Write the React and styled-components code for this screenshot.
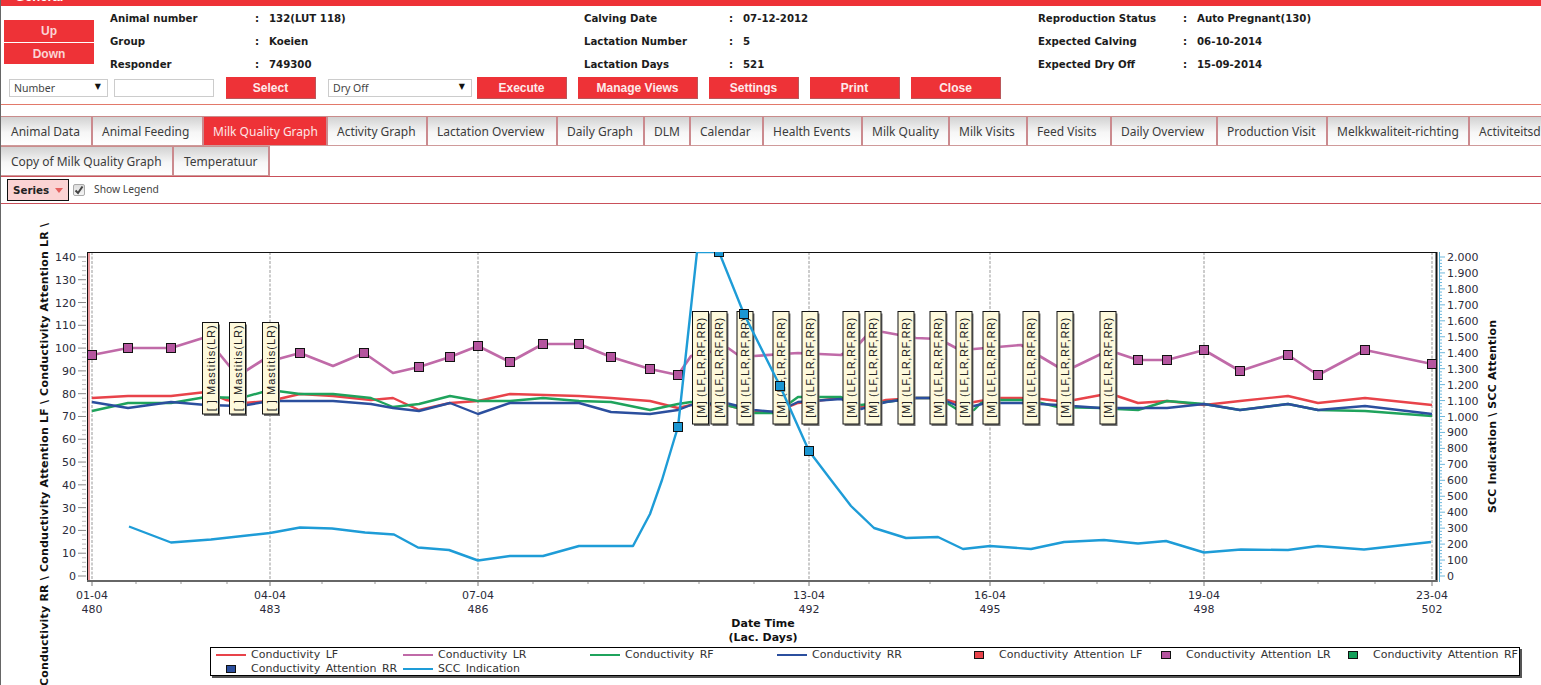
import React from "react";
import styled, { createGlobalStyle } from "styled-components";

const RED = "#ee3237";
const UI_FONT = `"Noto Sans", "DejaVu Sans", sans-serif`;
const DATA_FONT = `"DejaVu Sans", Verdana, sans-serif`;
const BTN_FONT = `"Liberation Sans", Arial, sans-serif`;

const GlobalStyle = createGlobalStyle`
  html, body { margin: 0; padding: 0; background: #fff; overflow: hidden; }
`;

const info = [
  {
    width: 474,
    rows: [
      ["Animal number", "132(LUT 118)"],
      ["Group", "Koeien"],
      ["Responder", "749300"],
    ],
  },
  {
    width: 454,
    rows: [
      ["Calving Date", "07-12-2012"],
      ["Lactation Number", "5"],
      ["Lactation Days", "521"],
    ],
  },
  {
    width: 400,
    rows: [
      ["Reproduction Status", "Auto Pregnant(130)"],
      ["Expected Calving", "06-10-2014"],
      ["Expected Dry Off", "15-09-2014"],
    ],
  },
];

const tabsTop = [
  ["Animal Data", 92],
  ["Animal Feeding", 111],
  ["Milk Quality Graph", 124],
  ["Activity Graph", 100],
  ["Lactation Overview", 130],
  ["Daily Graph", 87],
  ["DLM", 46],
  ["Calendar", 73],
  ["Health Events", 99],
  ["Milk Quality", 87],
  ["Milk Visits", 78],
  ["Feed Visits", 84],
  ["Daily Overview", 106],
  ["Production Visit", 110],
  ["Melkkwaliteit-richting", 142],
  ["Activiteitsdiagram", 130],
];
const tabsBottom = [
  ["Copy of Milk Quality Graph", 173],
  ["Temperatuur", 96],
];

const lf = [[91,398],[127,396],[170,396],[205,392],[225,400],[243,403],[269,401],[299,394],[332,396],[370,400],[392,398],[418,410],[449,403],[477,401],[509,394],[578,396],[610,398],[649,401],[677,408],[690,405],[725,405],[737,408],[753,412],[775,412],[797,403],[840,398],[860,407],[885,400],[915,398],[938,398],[957,403],[973,402],[997,398],[1020,398],[1040,399],[1057,401],[1073,400],[1100,395],[1116,396],[1137,403],[1166,401],[1203,405],[1239,401],[1287,396],[1317,403],[1364,398],[1431,405]];
const lr = [[91,355],[127,348],[170,348],[202,338],[207,340],[230,368],[243,372],[262,360],[277,359],[299,353],[332,366],[363,353],[392,373],[418,367],[449,357],[477,346],[509,362],[542,344],[578,344],[610,357],[649,369],[677,375],[690,356],[727,348],[737,355],[753,356],[797,353],[840,355],[857,345],[870,331],[882,332],[915,338],[938,339],[957,349],[973,349],[1020,345],[1057,367],[1073,367],[1100,354],[1116,353],[1137,360],[1166,360],[1203,350],[1239,371],[1287,355],[1317,375],[1364,350],[1431,364]];
const rf = [[91,411],[127,403],[170,403],[205,397],[240,398],[269,390],[299,394],[332,394],[370,398],[392,407],[418,404],[449,396],[477,401],[509,401],[542,398],[578,401],[610,402],[649,410],[677,404],[690,402],[725,405],[737,408],[753,413],[775,413],[797,397],[840,397],[860,405],[885,402],[915,398],[938,398],[957,410],[973,410],[980,403],[997,400],[1020,400],[1040,403],[1057,407],[1100,408],[1116,409],[1137,410],[1166,401],[1203,404],[1239,410],[1287,404],[1317,410],[1364,411],[1431,416]];
const rr = [[91,402],[127,408],[170,402],[205,405],[240,406],[269,401],[299,401],[332,401],[370,404],[392,408],[418,411],[449,403],[477,414],[509,403],[542,403],[578,403],[610,412],[649,414],[677,410],[690,405],[725,403],[753,410],[775,412],[797,402],[840,399],[860,409],[885,402],[915,398],[938,398],[957,406],[973,406],[985,403],[1020,403],[1057,405],[1100,408],[1116,408],[1137,408],[1166,408],[1203,404],[1239,410],[1287,404],[1317,410],[1364,406],[1431,414]];
const scc = [[128,526.5],[170,542.5],[210,539.5],[269,533],[299,527.5],[331,528.5],[364,532.5],[393,534.5],[417,547.5],[448,550],[477,560.5],[509,556],[542,556],[578,546],[632,546],[649,514],[661,480],[673,440],[677,427],[696,252],[718,252],[743,314],[779,386],[808,451],[830,480],[850,506],[873,528],[905,538],[937,537],[962,549],[989,546],[1030,549],[1063,542],[1103,540],[1137,543.5],[1165,541],[1203,552.5],[1240,549.5],[1287,550],[1317,546],[1363,549.5],[1430,542]];

const lrMarkers = [[91,355],[127,348],[170,348],[299,353],[363,353],[418,367],[449,357],[477,346],[509,362],[542,344],[578,344],[610,357],[649,369],[677,375],[1137,360],[1166,360],[1203,350],[1239,371],[1287,355],[1317,375],[1364,350],[1431,364]];
const sccMarkers = [[677,427],[718,252],[743,314],[779,386],[808,451]];

const mastitisTags = [209, 236, 269];
const visitTags = [699.5, 718, 744, 780, 809, 850, 872, 905, 937, 963, 990, 1030, 1064, 1107];

const dates = [
  [91, "01-04", "480"],
  [269, "04-04", "483"],
  [477, "07-04", "486"],
  [808, "13-04", "492"],
  [989, "16-04", "495"],
  [1203, "19-04", "498"],
  [1431, "23-04", "502"],
];
const minorX = [135,180,226,321,374,425,532,587,643,698,753,868,929,1043,1096,1149,1260,1317,1374];

const leftY = (v) => 576 - v * 2.279;
const rightY = (v) => 576 - v * 0.1595;
const pts = (list) => list.map((p) => p.join(",")).join(" ");
const range = (end, step) => {
  const out = [];
  for (let v = 0; v <= end; v += step) out.push(v);
  return out;
};
const thousand = (v) =>
  v >= 1000 ? `${Math.floor(v / 1000)}.${String(v % 1000).padStart(3, "0")}` : String(v);

const legend = [
  { label: "Conductivity LF", color: "#e8434a" },
  { label: "Conductivity LR", color: "#c06aa8" },
  { label: "Conductivity RF", color: "#1fa35c" },
  { label: "Conductivity RR", color: "#2b4f9e" },
  { label: "Conductivity Attention LF", color: "#e8434a", box: true },
  { label: "Conductivity Attention LR", color: "#b5559f", box: true },
  { label: "Conductivity Attention RF", color: "#14a05a", box: true },
  { label: "Conductivity Attention RR", color: "#2b4f9e", box: true },
  { label: "SCC Indication", color: "#1e9cd7" },
];

const Page = styled.div`
  width: 1540px;
  height: 685px;
  border-left: 1px solid #666;
  display: flex;
  flex-direction: column;
  overflow: hidden;
  position: relative;
  background: #fff;
`;

const TitleBar = styled.div`
  height: 6px;
  flex: none;
  background: ${RED};
  overflow: hidden;
  padding-left: 14px;
  color: #fff;
  font: bold 13px/13px ${BTN_FONT};
  span {
    display: block;
    margin-top: -10px;
  }
`;

const Header = styled.div`
  display: flex;
  height: 71px;
  flex: none;
  padding-top: 1px;
  box-sizing: border-box;
`;

const UpDown = styled.div`
  width: 90px;
  margin: 13px 16px 0 3px;
  display: flex;
  flex-direction: column;
  gap: 1px;
`;

const UpDownButton = styled.div`
  height: 21.5px;
  background: ${RED};
  color: #fbd5d5;
  text-align: center;
  font: bold 12px/23px ${BTN_FONT};
`;

const InfoGroup = styled.div`
  width: ${(p) => p.$width}px;
  flex: none;
  display: grid;
  grid-template-columns: 145px 14px auto;
  grid-auto-rows: 23px;
  align-items: center;
  justify-content: start;
  font: bold 10.2px ${DATA_FONT};
  color: #1c1c1c;
`;

const Controls = styled.div`
  display: flex;
  align-items: center;
  height: 22px;
  flex: none;
  padding-left: 8px;
`;

const FakeSelect = styled.div`
  width: ${(p) => p.$width}px;
  height: 18px;
  box-sizing: border-box;
  border: 1px solid #ccc;
  margin-left: ${(p) => p.$left || 0}px;
  padding: 0 4px;
  display: flex;
  align-items: center;
  justify-content: space-between;
  color: #444;
  font: 10.5px ${UI_FONT};
  i {
    font-style: normal;
    font-size: 8px;
    color: #111;
    margin: -4px 2px 0 0;
    font-family: ${DATA_FONT};
  }
`;

const TextBox = styled.div`
  width: 100px;
  height: 18px;
  box-sizing: border-box;
  border: 1px solid #ccc;
  margin-left: 6px;
`;

const ActionButton = styled.div`
  width: ${(p) => p.$width || 90}px;
  height: 22px;
  margin-left: ${(p) => p.$left}px;
  box-sizing: border-box;
  background: ${RED};
  border-right: 1px solid #b9585b;
  border-bottom: 1px solid #b9585b;
  color: #fdeaea;
  text-align: center;
  font: bold 12px/23px ${BTN_FONT};
`;

const Rule = styled.div`
  height: 1px;
  flex: none;
  background: ${(p) => p.$color};
  margin-top: ${(p) => p.$top || 0}px;
`;

const TabRow = styled.div`
  display: flex;
  height: 30px;
  flex: none;
  margin-top: ${(p) => p.$top || 0}px;
`;

const Tab = styled.div`
  flex: none;
  width: ${(p) => p.$width}px;
  box-sizing: border-box;
  border-top: 1px solid #c98c8c;
  border-right: 2px solid #cb8a8e;
  border-bottom: 1px solid #cf9a9a;
  background: ${(p) =>
    p.$active ? RED : "linear-gradient(#d2d2d2, #f6f6f6 55%, #fff)"};
  color: ${(p) => (p.$active ? "#fde6e6" : "#3c3c3c")};
  padding-left: ${(p) => p.$pad}px;
  white-space: nowrap;
  font: 12px/29px ${UI_FONT};
`;

const SeriesBar = styled.div`
  display: flex;
  align-items: center;
  height: 26px;
  flex: none;
  padding-left: 6px;
`;

const SeriesButton = styled.div`
  width: 62px;
  height: 22px;
  box-sizing: border-box;
  border: 1px solid #111;
  background: #fbd3d3;
  display: flex;
  align-items: center;
  padding-left: 5px;
  gap: 6px;
  color: #222;
  font: bold 10.3px ${DATA_FONT};
`;

const Caret = styled.span`
  width: 0;
  height: 0;
  border-left: 4px solid transparent;
  border-right: 4px solid transparent;
  border-top: 5px solid #e4605f;
`;

const CheckBox = styled.span`
  width: 12px;
  height: 12px;
  box-sizing: border-box;
  margin-left: 4px;
  border: 1px solid #aaa;
  border-radius: 2px;
  background: linear-gradient(#ddd, #f4f4f4);
  display: flex;
  align-items: center;
  justify-content: center;
`;

const CheckLabel = styled.span`
  margin: -2px 0 0 9px;
  color: #444;
  font: 10.3px ${UI_FONT};
`;

const ChartArea = styled.div`
  flex: 1;
  min-height: 0;
`;

const ChartSvg = styled.svg`
  display: block;
  width: 1540px;
  height: 481px;
  font-family: ${DATA_FONT};
`;

const Legend = styled.div`
  position: absolute;
  left: 209px;
  top: 647px;
  width: 1310px;
  height: 29px;
  box-sizing: border-box;
  border: 1px solid #000;
  box-shadow: 2px 2px 0 #555;
  background: #fff;
  padding-left: 5px;
  display: grid;
  grid-template-columns: repeat(7, 187px);
  grid-auto-rows: 14px;
  color: #333;
  font: 11px/14px ${DATA_FONT};
  word-spacing: 2px;
`;

const LegendItem = styled.div`
  display: flex;
  align-items: center;
  white-space: nowrap;
`;

const LegendSwatch = styled.span`
  flex: none;
  width: ${(p) => (p.$box ? 10 : 30)}px;
  height: ${(p) => (p.$box ? 8 : 2)}px;
  margin: ${(p) => (p.$box ? "0 15px 0 10px" : "0 5px 0 0")};
  box-sizing: border-box;
  background: ${(p) => p.$color};
  border: ${(p) => (p.$box ? "1px solid #111" : "none")};
`;

const AxisLabel = styled.text`
  font-size: 11px;
  fill: #2b2b3a;
`;

const AxisTitle = styled.text`
  font-size: 11px;
  font-weight: bold;
  fill: #111;
`;

const TagText = styled.text`
  font-size: 11px;
  font-family: ${BTN_FONT};
  fill: #222;
`;

function Series({ points, color, width = 2.4 }) {
  return <polyline points={pts(points)} fill="none" stroke={color} strokeWidth={width} strokeLinejoin="round" />;
}

function Marker({ x, y, color }) {
  return <rect x={x - 4.5} y={y - 4.5} width={9} height={9} fill={color} stroke="#111" strokeWidth={1} />;
}

function NoteTag({ x, top, bottom, text, length }) {
  const mid = (top + bottom) / 2;
  return (
    <g>
      <rect x={x - 6.5} y={top + 2} width={16} height={bottom - top} fill="#777" />
      <rect x={x - 8} y={top} width={16} height={bottom - top} fill="#fdf9dc" stroke="#111" strokeWidth={1} />
      <TagText
        transform={`translate(${x + 4} ${mid}) rotate(-90)`}
        textAnchor="middle"
        textLength={length}
      >
        {text}
      </TagText>
    </g>
  );
}

function QualityChart() {
  return (
    <ChartSvg viewBox="0 204 1540 481">
      <defs>
        <clipPath id="plot">
          <rect x="87" y="252" width="1349" height="330" />
        </clipPath>
      </defs>

      {dates.map(([x]) => (
        <line key={x} x1={x} x2={x} y1={252} y2={581} stroke="#999" strokeDasharray="3 1.5" />
      ))}

      {/* left value axis */}
      {range(140, 2).map((v) => (
        <line
          key={v}
          x1={v % 10 === 0 ? 77 : 81}
          x2={85}
          y1={leftY(v)}
          y2={leftY(v)}
          stroke={v % 10 === 0 ? "#888" : "#bbb"}
        />
      ))}
      {range(140, 10).map((v) => (
        <AxisLabel key={v} x={75} y={leftY(v) + 4} textAnchor="end">
          {v}
        </AxisLabel>
      ))}
      <line x1={86.5} x2={86.5} y1={252} y2={582} stroke="#111" />
      <line x1={88} x2={88} y1={252} y2={582} stroke="#d8343c" />

      {/* right value axis */}
      <line x1={1438.5} x2={1438.5} y1={252} y2={582} stroke="#56aed6" />
      {range(2000, 20).map((v) => (
        <line
          key={v}
          x1={1439}
          x2={v % 100 === 0 ? 1444 : 1441}
          y1={rightY(v)}
          y2={rightY(v)}
          stroke="#6db8dc"
        />
      ))}
      {range(2000, 100).map((v) => (
        <AxisLabel key={v} x={1446} y={rightY(v) + 4}>
          {thousand(v)}
        </AxisLabel>
      ))}

      {/* frame */}
      <line x1={86} x2={1436} y1={252.5} y2={252.5} stroke="#111" />
      <line x1={1435.5} x2={1435.5} y1={252} y2={582} stroke="#111" strokeWidth={2} />
      <line x1={86} x2={1436} y1={581} y2={581} stroke="#666" strokeWidth={2} />

      {/* date axis */}
      {minorX.map((x) => (
        <line key={x} x1={x} x2={x} y1={582} y2={584} stroke="#999" />
      ))}
      {dates.map(([x, day, lac]) => (
        <g key={x}>
          <line x1={x} x2={x} y1={582} y2={586} stroke="#777" />
          <AxisLabel x={x} y={599} textAnchor="middle">
            {day}
          </AxisLabel>
          <AxisLabel x={x} y={613} textAnchor="middle">
            {lac}
          </AxisLabel>
        </g>
      ))}
      <AxisTitle x={762} y={627} textAnchor="middle">
        Date Time
      </AxisTitle>
      <AxisTitle x={762} y={641} textAnchor="middle">
        (Lac. Days)
      </AxisTitle>

      <AxisTitle transform="translate(47 686) rotate(-90)" textLength={463}>
        {"Conductivity RR \\ Conductivity Attention LF \\ Conductivity Attention LR \\"}
      </AxisTitle>
      <AxisTitle transform="translate(1495 513) rotate(-90)" textLength={193}>
        {"SCC Indication \\ SCC Attention"}
      </AxisTitle>

      <g clipPath="url(#plot)">
        <Series points={lf} color="#e8434a" />
        <Series points={rf} color="#1fa35c" />
        <Series points={rr} color="#2b4f9e" />
        <Series points={lr} color="#c06aa8" width={2.7} />
        {lrMarkers.map(([x, y]) => (
          <Marker key={x} x={x} y={y} color="#b5559f" />
        ))}
      </g>

      {mastitisTags.map((x) => (
        <NoteTag key={x} x={x + 0.5} top={322.5} bottom={414} text="[ ] Mastitis(LR)" length={86} />
      ))}
      {visitTags.map((x) => (
        <NoteTag key={x} x={x} top={311.5} bottom={424} text="[M] (LF,LR,RF,RR)" length={100} />
      ))}

      <g clipPath="url(#plot)">
        <Series points={scc} color="#1e9cd7" />
        {sccMarkers.map(([x, y]) => (
          <Marker key={x} x={x} y={y} color="#1b96d2" />
        ))}
      </g>
    </ChartSvg>
  );
}

export default function App() {
  return (
    <Page>
      <GlobalStyle />
      <TitleBar>
        <span>General</span>
      </TitleBar>

      <Header>
        <UpDown>
          <UpDownButton>Up</UpDownButton>
          <UpDownButton>Down</UpDownButton>
        </UpDown>
        {info.map((group) => (
          <InfoGroup key={group.rows[0][0]} $width={group.width}>
            {group.rows.map(([label, value]) => (
              <React.Fragment key={label}>
                <span>{label}</span>
                <span>:</span>
                <span>{value}</span>
              </React.Fragment>
            ))}
          </InfoGroup>
        ))}
      </Header>

      <Controls>
        <FakeSelect $width={99}>
          Number <i>▼</i>
        </FakeSelect>
        <TextBox />
        <ActionButton $left={12}>Select</ActionButton>
        <FakeSelect $width={144} $left={12}>
          Dry Off <i>▼</i>
        </FakeSelect>
        <ActionButton $left={5}>Execute</ActionButton>
        <ActionButton $left={11} $width={120}>
          Manage Views
        </ActionButton>
        <ActionButton $left={11}>Settings</ActionButton>
        <ActionButton $left={11}>Print</ActionButton>
        <ActionButton $left={11}>Close</ActionButton>
      </Controls>

      <Rule $color="#e2796a" $top={5} />

      <TabRow $top={11}>
        {tabsTop.map(([label, width], i) => (
          <Tab key={label} $width={width} $pad={i === 0 ? 10 : 9} $active={label === "Milk Quality Graph"}>
            {label}
          </Tab>
        ))}
      </TabRow>
      <TabRow>
        {tabsBottom.map(([label, width]) => (
          <Tab key={label} $width={width} $pad={10}>
            {label}
          </Tab>
        ))}
      </TabRow>

      <Rule $color="#c9505a" />
      <SeriesBar>
        <SeriesButton>
          Series <Caret />
        </SeriesButton>
        <CheckBox>
          <svg width="10" height="10" viewBox="0 0 10 10">
            <path d="M1.5 5.5 L4 8 L8.5 1.5" fill="none" stroke="#444" strokeWidth="2" />
          </svg>
        </CheckBox>
        <CheckLabel>Show Legend</CheckLabel>
      </SeriesBar>
      <Rule $color="#c9505a" />

      <ChartArea>
        <QualityChart />
      </ChartArea>

      <Legend>
        {legend.map((item) => (
          <LegendItem key={item.label}>
            <LegendSwatch $color={item.color} $box={item.box} />
            {item.label}
          </LegendItem>
        ))}
      </Legend>
    </Page>
  );
}
